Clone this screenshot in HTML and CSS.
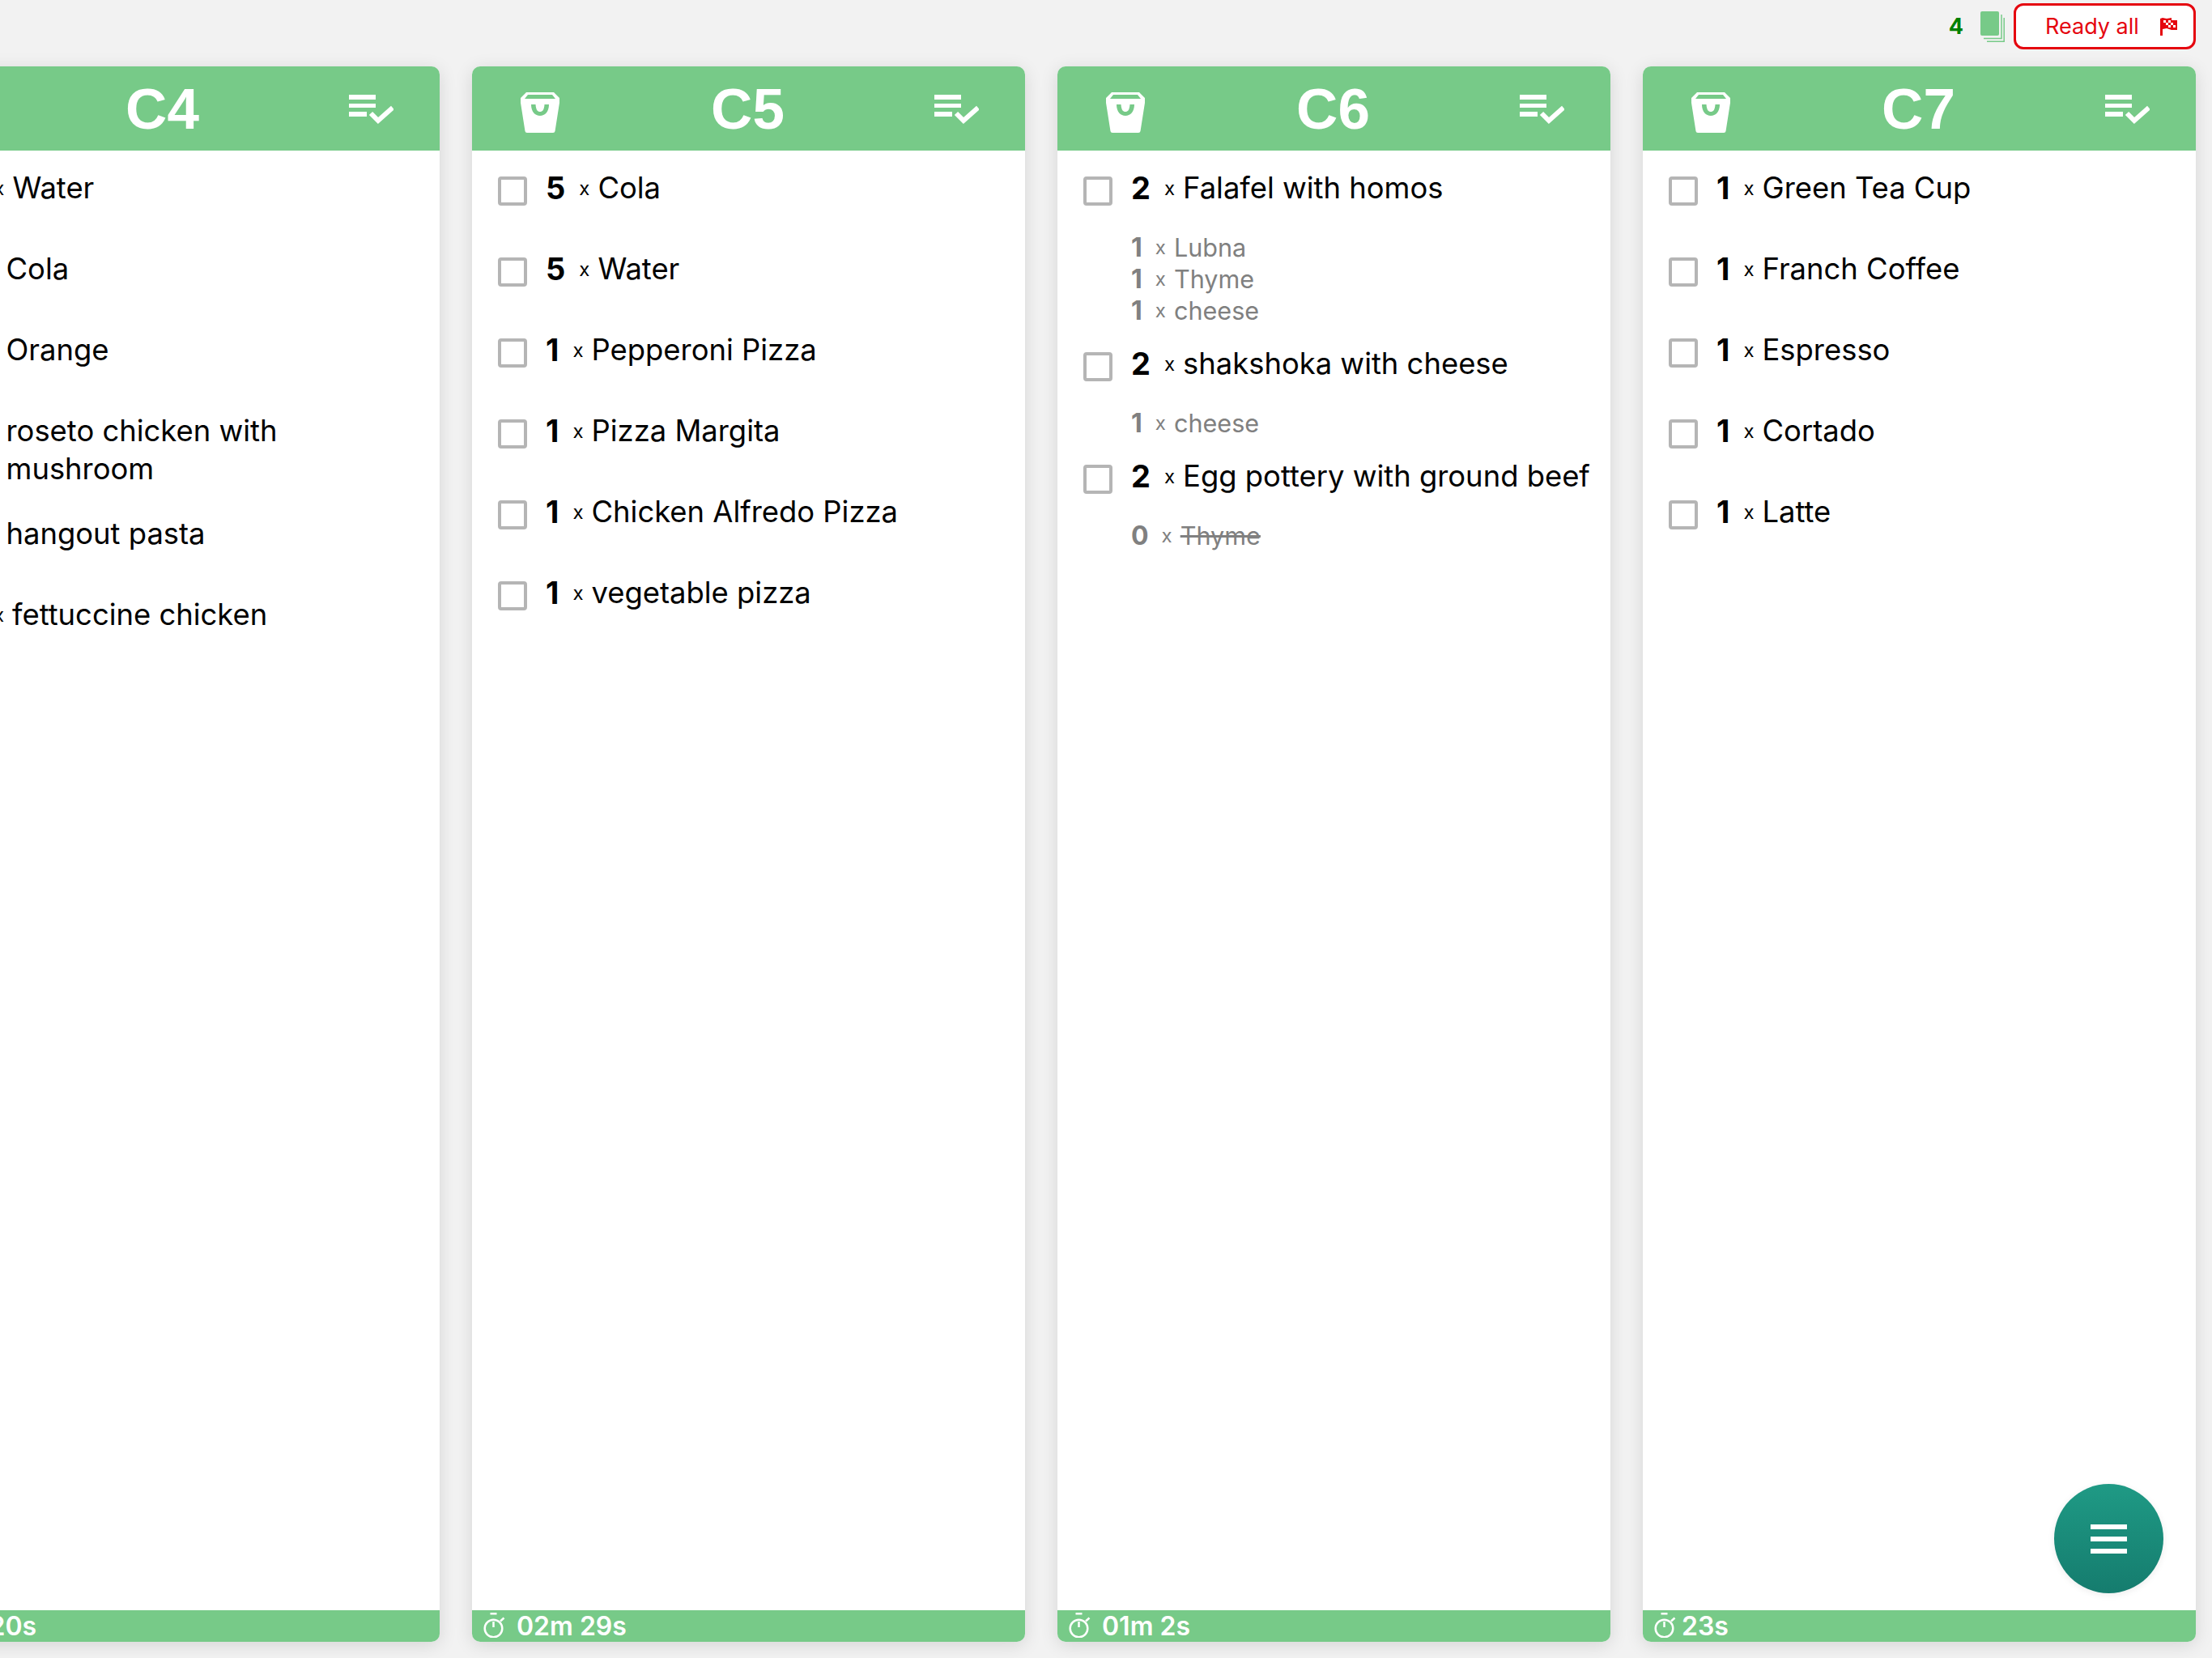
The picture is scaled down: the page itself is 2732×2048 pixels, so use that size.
FILE: index.html
```html
<!DOCTYPE html>
<html lang="en">
<head>
    <meta charset="UTF-8">
    <meta name="viewport" content="width=device-width, initial-scale=1.0">
    <title>Kitchen Orders</title>
    <link rel="stylesheet" href="styles.css">
</head>
<body>

    <svg class="icon-defs" width="0" height="0">
        <defs>
            <symbol id="bag" viewBox="0 0 48 50">
                <path fill="#fff" fill-rule="evenodd" d="M7 0H41L48 7V13L42.500 48Q42.200 50 40 50H8Q5.800 50 5.500 48L0 13V7ZM9 3L5 8H43L39 3ZM13 15C13 24 18 29 24 29S35 24 35 15H29.500C29 22 27 24 24 24S19 22 18.500 15Z"/>
            </symbol>
            <symbol id="list-check" viewBox="0 0 55 37">
                <path fill="#fff" d="M0 0H33V6H0ZM0 11H33V16H0ZM0 21H22V27H0Z"/>
                <path fill="none" stroke="#fff" stroke-width="6" d="M27 23L36 32L54 16"/>
            </symbol>
            <symbol id="timer" viewBox="0 0 28 31">
                <g fill="none" stroke="#fff" stroke-width="2.500">
                    <circle cx="12.500" cy="19.500" r="10.800"/>
                    <path d="M8.500 1.200H16.500M12.500 11V18M21 10.500L25.500 6.500"/>
                </g>
            </symbol>
        </defs>
    </svg>

    <div class="top-bar">
        <span class="ticket-count">4</span>
        <svg class="stack-icon" width="30" height="38" viewBox="0 0 30 38">
            <rect width="23" height="30" rx="2" fill="#77ca88"/>
            <path fill="none" stroke="#77ca88" stroke-width="1.500" d="M26 4V33.500H4M29.200 8V37.200H8"/>
        </svg>
        <button class="ready-all">
            <span>Ready all</span>
            <svg width="22" height="22" viewBox="0 0 22 22">
                <path fill="#e5060f" d="M0 1L3 0L8 1L14 0L14 3H21L21 15L14 15L8 13L3 14V22H0Z"/>
                <path fill="#fff" d="M4 3H7V6H4ZM10 3H13V6H10ZM7 6H10V9H7ZM13 6H16V9H13ZM10 9H13V12H10ZM16 9H19V12H16Z"/>
            </svg>
        </button>
    </div>

    <div class="board">

        <section class="ticket">
            <header class="ticket-head">
                <svg class="bag-icon"><use href="#bag"/></svg>
                <h2>C4</h2>
                <svg class="check-icon"><use href="#list-check"/></svg>
            </header>
            <ul class="items">
                <li class="item"><div class="item-row"><input type="checkbox" class="tick"><b class="qty">5</b><span class="times">x</span><span class="name">Water</span></div></li>
                <li class="item"><div class="item-row"><input type="checkbox" class="tick"><b class="qty">1</b><span class="times">x</span><span class="name">Cola</span></div></li>
                <li class="item"><div class="item-row"><input type="checkbox" class="tick"><b class="qty">1</b><span class="times">x</span><span class="name">Orange</span></div></li>
                <li class="item"><div class="item-row"><input type="checkbox" class="tick"><b class="qty">1</b><span class="times">x</span><span class="name">roseto chicken with mushroom</span></div></li>
                <li class="item"><div class="item-row"><input type="checkbox" class="tick"><b class="qty">1</b><span class="times">x</span><span class="name">hangout pasta</span></div></li>
                <li class="item"><div class="item-row"><input type="checkbox" class="tick"><b class="qty">2</b><span class="times">x</span><span class="name">fettuccine chicken</span></div></li>
            </ul>
            <footer class="ticket-foot">
                <svg class="timer-icon"><use href="#timer"/></svg>
                <span class="elapsed">01m 20s</span>
            </footer>
        </section>

        <section class="ticket">
            <header class="ticket-head">
                <svg class="bag-icon"><use href="#bag"/></svg>
                <h2>C5</h2>
                <svg class="check-icon"><use href="#list-check"/></svg>
            </header>
            <ul class="items">
                <li class="item"><div class="item-row"><input type="checkbox" class="tick"><b class="qty">5</b><span class="times">x</span><span class="name">Cola</span></div></li>
                <li class="item"><div class="item-row"><input type="checkbox" class="tick"><b class="qty">5</b><span class="times">x</span><span class="name">Water</span></div></li>
                <li class="item"><div class="item-row"><input type="checkbox" class="tick"><b class="qty">1</b><span class="times">x</span><span class="name">Pepperoni Pizza</span></div></li>
                <li class="item"><div class="item-row"><input type="checkbox" class="tick"><b class="qty">1</b><span class="times">x</span><span class="name">Pizza Margita</span></div></li>
                <li class="item"><div class="item-row"><input type="checkbox" class="tick"><b class="qty">1</b><span class="times">x</span><span class="name">Chicken Alfredo Pizza</span></div></li>
                <li class="item"><div class="item-row"><input type="checkbox" class="tick"><b class="qty">1</b><span class="times">x</span><span class="name">vegetable pizza</span></div></li>
            </ul>
            <footer class="ticket-foot">
                <svg class="timer-icon"><use href="#timer"/></svg>
                <span class="elapsed">02m 29s</span>
            </footer>
        </section>

        <section class="ticket">
            <header class="ticket-head">
                <svg class="bag-icon"><use href="#bag"/></svg>
                <h2>C6</h2>
                <svg class="check-icon"><use href="#list-check"/></svg>
            </header>
            <ul class="items">
                <li class="item">
                    <div class="item-row"><input type="checkbox" class="tick"><b class="qty">2</b><span class="times">x</span><span class="name">Falafel with homos</span></div>
                    <ul class="mods">
                        <li class="mod"><b class="mod-qty">1</b><span class="mod-times">x</span><span>Lubna</span></li>
                        <li class="mod"><b class="mod-qty">1</b><span class="mod-times">x</span><span>Thyme</span></li>
                        <li class="mod"><b class="mod-qty">1</b><span class="mod-times">x</span><span>cheese</span></li>
                    </ul>
                </li>
                <li class="item">
                    <div class="item-row"><input type="checkbox" class="tick"><b class="qty">2</b><span class="times">x</span><span class="name">shakshoka with cheese</span></div>
                    <ul class="mods">
                        <li class="mod"><b class="mod-qty">1</b><span class="mod-times">x</span><span>cheese</span></li>
                    </ul>
                </li>
                <li class="item">
                    <div class="item-row"><input type="checkbox" class="tick"><b class="qty">2</b><span class="times">x</span><span class="name">Egg pottery with ground beef</span></div>
                    <ul class="mods">
                        <li class="mod"><b class="mod-qty">0</b><span class="mod-times">x</span><s>Thyme</s></li>
                    </ul>
                </li>
            </ul>
            <footer class="ticket-foot">
                <svg class="timer-icon"><use href="#timer"/></svg>
                <span class="elapsed">01m 2s</span>
            </footer>
        </section>

        <section class="ticket">
            <header class="ticket-head">
                <svg class="bag-icon"><use href="#bag"/></svg>
                <h2>C7</h2>
                <svg class="check-icon"><use href="#list-check"/></svg>
            </header>
            <ul class="items">
                <li class="item"><div class="item-row"><input type="checkbox" class="tick"><b class="qty">1</b><span class="times">x</span><span class="name">Green Tea Cup</span></div></li>
                <li class="item"><div class="item-row"><input type="checkbox" class="tick"><b class="qty">1</b><span class="times">x</span><span class="name">Franch Coffee</span></div></li>
                <li class="item"><div class="item-row"><input type="checkbox" class="tick"><b class="qty">1</b><span class="times">x</span><span class="name">Espresso</span></div></li>
                <li class="item"><div class="item-row"><input type="checkbox" class="tick"><b class="qty">1</b><span class="times">x</span><span class="name">Cortado</span></div></li>
                <li class="item"><div class="item-row"><input type="checkbox" class="tick"><b class="qty">1</b><span class="times">x</span><span class="name">Latte</span></div></li>
            </ul>
            <footer class="ticket-foot">
                <svg class="timer-icon"><use href="#timer"/></svg>
                <span class="elapsed elapsed-short">23s</span>
            </footer>
        </section>

    </div>

    <button class="menu-fab">
        <span></span><span></span><span></span>
    </button>

</body>
</html>
```

FILE: styles.css
```css
/* Page */
body {
    margin: 0;
    width: 2732px;
    height: 2048px;
    overflow: hidden;
    background: #f2f2f2;
    color: #000;
    font-family: Inter, "Noto Sans", sans-serif;
}

ul {
    list-style: none;
    margin: 0;
    padding: 0;
}

.icon-defs {
    display: block;
}

/* Top bar */
.top-bar {
    height: 82px;
    padding: 4px 20px 0 0;
    box-sizing: border-box;
    display: flex;
    justify-content: flex-end;
    align-items: flex-start;
}

.ticket-count {
    margin: 12px 21px 0 0;
    color: #008000;
    font-size: 27px;
    font-weight: 700;
    line-height: 34px;
}

.stack-icon {
    margin: 10px 11px 0 0;
}

.ready-all {
    width: 225px;
    height: 57px;
    padding: 0 19px 0 36px;
    display: flex;
    align-items: center;
    justify-content: space-between;
    background: #fff;
    border: 3px solid #e5060f;
    border-radius: 12px;
    color: #e5060f;
    font-family: inherit;
    font-size: 27px;
}

/* Ticket columns. The board is scrolled sideways, so C4 runs off the left edge */
.board {
    display: flex;
    gap: 40px;
    height: 1946px;
    margin-left: -140px;
}

.ticket {
    flex: 0 0 683px;
    display: flex;
    flex-direction: column;
    background: #fff;
    border-radius: 10px;
    box-shadow: 0 4px 22px rgba(0,0,0,0.12);
}

.ticket-head {
    height: 104px;
    padding: 0 57px 0 60px;
    display: flex;
    align-items: center;
    justify-content: space-between;
    background: #77ca88;
    border-radius: 10px 10px 0 0;
}

.ticket-head h2 {
    margin: 0 0 0 2px;
    color: #fff;
    font-family: "Liberation Sans", Arial, sans-serif;
    font-size: 71px;
    font-weight: 700;
    line-height: 1;
}

.bag-icon {
    width: 48px;
    height: 50px;
    margin-top: 10px;
}

.check-icon {
    width: 55px;
    height: 37px;
    margin-top: 3px;
}

/* Item rows */
.items {
    flex: 1;
    padding: 23px 16px 0 32px;
}

.item {
    margin-bottom: 21px;
}

.item-row {
    display: flex;
    align-items: flex-start;
    box-sizing: border-box;
    min-height: 79px;
    padding-bottom: 12px;
    font-size: 36.4px;
    line-height: 47px;
}

.tick {
    appearance: none;
    flex: none;
    width: 36px;
    height: 36px;
    margin: 9px 23px 0 0;
    background: #fff;
    border: 4px solid #b5b5b5;
    border-radius: 4px;
    box-sizing: border-box;
}

.qty {
    font-size: 38px;
    font-weight: 700;
    margin-right: 17px;
}

.times {
    font-size: 24px;
    margin-right: 10px;
}

.mods {
    margin-top: -2px;
    padding: 0 0 2px 59px;
    color: #808080;
    font-size: 30.6px;
    line-height: 39px;
}

.mod {
    display: flex;
}

.mod-qty {
    margin-right: 16px;
    font-size: 32px;
}

.mod-times {
    font-size: 24px;
    margin-right: 10px;
}

/* Footer timer */
.ticket-foot {
    height: 39px;
    padding-left: 14px;
    display: flex;
    align-items: center;
    background: #77ca88;
    border-radius: 0 0 10px 10px;
    color: #fff;
    font-size: 32px;
    font-weight: 600;
}

.timer-icon {
    width: 28px;
    height: 31px;
    margin: 0 13px 2px 0;
}

.elapsed-short {
    margin-left: -7px;
}

/* Menu button */
.menu-fab {
    position: absolute;
    left: 2537px;
    top: 1833px;
    width: 135px;
    height: 135px;
    padding: 0;
    display: flex;
    flex-direction: column;
    align-items: center;
    justify-content: center;
    gap: 9px;
    border: none;
    border-radius: 50%;
    background: linear-gradient(180deg, #1f9a85 0%, #157c6e 100%);
    box-shadow: 0 2px 8px rgba(0,0,0,0.08);
}

.menu-fab span {
    width: 45px;
    height: 6px;
    background: #fff;
}
```
